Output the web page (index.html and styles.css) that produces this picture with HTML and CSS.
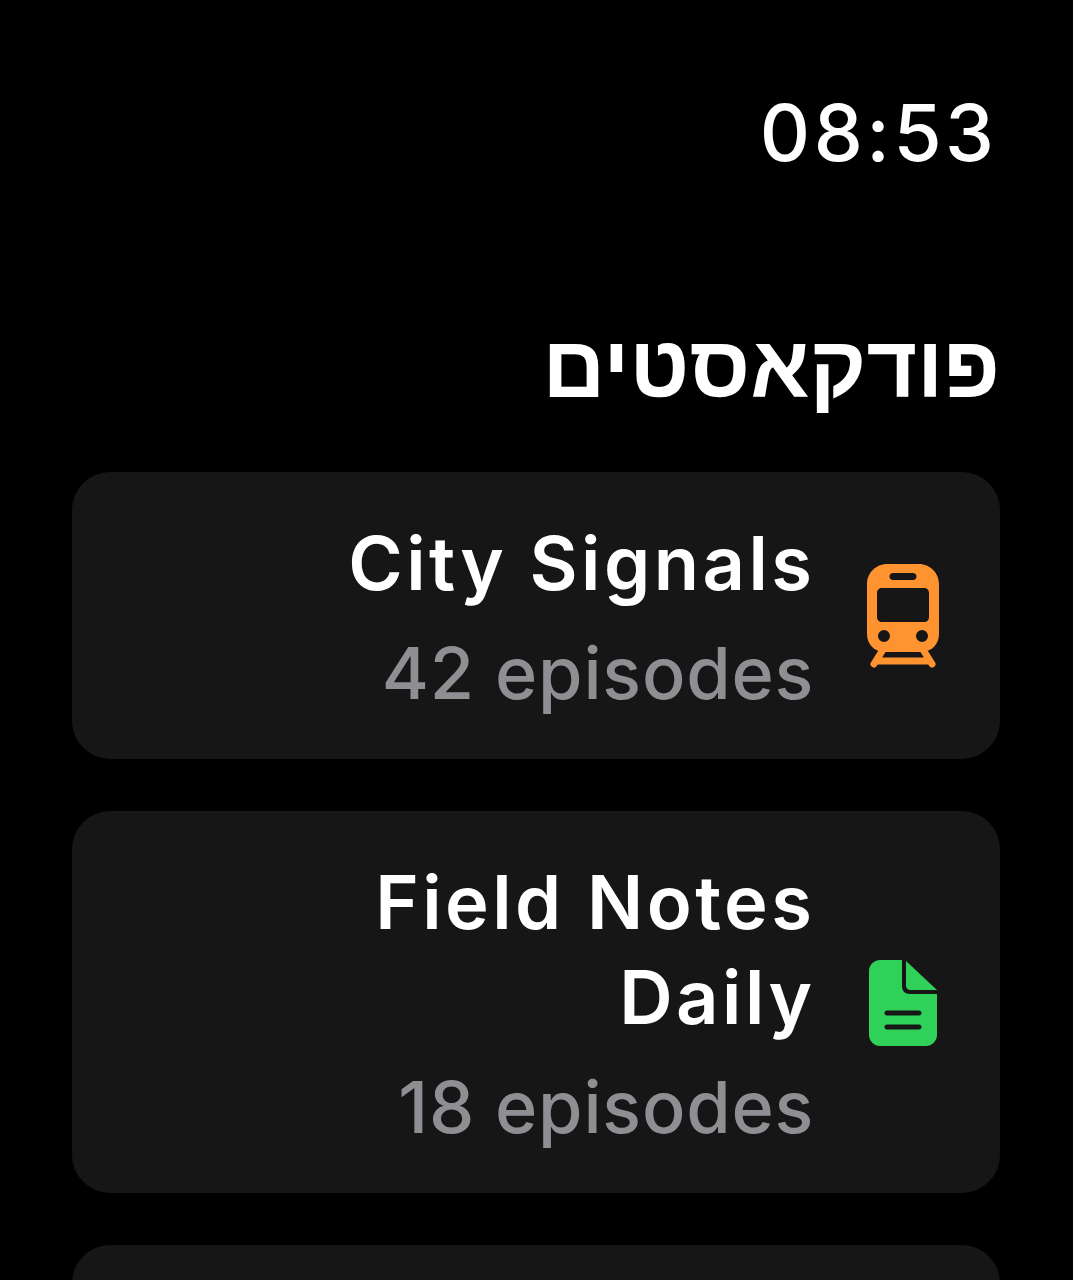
FILE: index.html
```html
<!DOCTYPE html>
<html lang="he" dir="rtl">
<head>
    <meta charset="UTF-8">
    <meta name="viewport" content="width=device-width, initial-scale=1.0">
    <title>פודקאסטים</title>
    <link rel="stylesheet" href="styles.css">
</head>
<body>
    <div class="screen">
        <div class="time">08:53</div>
        <h1 class="page-title">פודקאסטים</h1>
        <div class="podcast-list">
            <div class="podcast-card">
                <svg class="podcast-icon icon-train" viewBox="0 0 72 104">
                    <path fill-rule="evenodd" d="M20 0h32c11 0 20 9 20 20v50c0 10-7 18-18 18H18C7 88 0 80 0 70V20C0 9 9 0 20 0zM26 9c-2 0-3.500 1.500-3.500 3.500S24 16 26 16h20c2 0 3.500-1.500 3.500-3.500S48 9 46 9H26zM15 24c-3 0-5 2-5 5v24c0 3 2 5 5 5h42c3 0 5-2 5-5V29c0-3-2-5-5-5H15zM17 66a6 6 0 1 0 0 12 6 6 0 0 0 0-12zM55 66a6 6 0 1 0 0 12 6 6 0 0 0 0-12z"/>
                    <path class="icon-rail" d="M17 84L7 100M55 84l10 16M12 97h48"/>
                </svg>
                <div class="podcast-text">
                    <div class="podcast-name">City Signals</div>
                    <div class="podcast-count">42 episodes</div>
                </div>
            </div>
            <div class="podcast-card">
                <svg class="podcast-icon icon-doc" viewBox="0 0 68 86">
                    <path fill-rule="evenodd" d="M11 0h22v26c0 5 3 8 8 8h27v41c0 6-5 11-11 11H11C5 86 0 81 0 75V11C0 5 5 0 11 0zM18 50.500c-1.500 0-2.500 1-2.500 2.500s1 2.500 2.500 2.500h32c1.500 0 2.500-1 2.500-2.500s-1-2.500-2.500-2.500H18zM18 64.500c-1.500 0-2.500 1-2.500 2.500s1 2.500 2.500 2.500h32c1.500 0 2.500-1 2.500-2.500s-1-2.500-2.500-2.500H18z"/>
                    <path d="M37 1l31 29H41c-2 0-4-2-4-4V1z"/>
                </svg>
                <div class="podcast-text">
                    <div class="podcast-name">Field Notes Daily</div>
                    <div class="podcast-count">18 episodes</div>
                </div>
            </div>
            <div class="podcast-card podcast-card-next"></div>
        </div>
    </div>
</body>
</html>
```

FILE: styles.css
```css
* {
    margin: 0;
    padding: 0;
    box-sizing: border-box;
}

body {
    font-family: Inter, "Liberation Sans", sans-serif;
    background: #000;
    color: white;
}

.screen {
    height: 1280px;
    overflow: hidden;
    padding: 89px 73px 0 72px;
}

.time {
    direction: ltr;
    text-align: right;
    font-size: 78px;
    line-height: 88px;
    font-weight: 500;
    letter-spacing: 3.5px;
    padding-right: 2.5px;
}

.page-title {
    font-family: "Liberation Sans", sans-serif;
    font-size: 87px;
    line-height: 90px;
    font-weight: 700;
    margin-top: 145px;
}

.podcast-list {
    display: flex;
    flex-direction: column;
    gap: 52px;
    margin-top: 60px;
}

.podcast-card {
    background: #161616;
    border-radius: 38px;
    padding: 44px 61px 39px 40px;
    display: flex;
    align-items: center;
    gap: 46.5px;
}

.podcast-card-next {
    height: 286px;
}

.podcast-icon {
    flex-shrink: 0;
}

.icon-train {
    width: 72px;
    fill: #ff9330;
    margin-left: 5px;
    margin-bottom: 5px;
}

.icon-rail {
    fill: none;
    stroke: #ff9330;
    stroke-width: 7;
    stroke-linecap: round;
}

.icon-doc {
    width: 68px;
    fill: #30d158;
    margin-right: 2px;
    margin-left: 7px;
    margin-bottom: 3px;
}

.podcast-text {
    direction: ltr;
    text-align: right;
    width: 480px;
}

.podcast-name {
    font-size: 74px;
    line-height: 95px;
    font-weight: 600;
    letter-spacing: 3.5px;
}

.podcast-count {
    font-size: 72px;
    line-height: 95px;
    font-weight: 500;
    letter-spacing: 0.8px;
    color: #8e8e93;
    margin-top: 14px;
    margin-right: 1.3px;
}
```
